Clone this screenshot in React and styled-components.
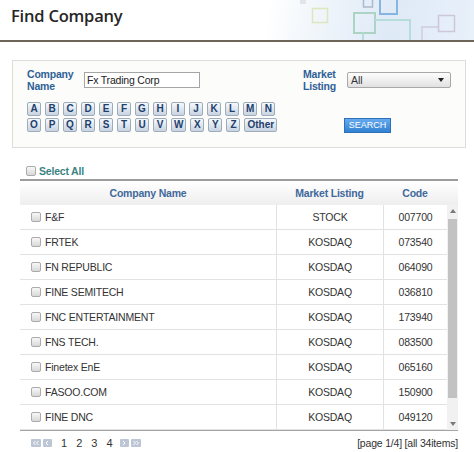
import React from 'react';
import styled, { createGlobalStyle } from 'styled-components';

const Global = createGlobalStyle`
  html, body { margin: 0; padding: 0; background: #fff; }
  body { font-family: "Liberation Sans", Arial, sans-serif; color: #333; }
  * { box-sizing: border-box; }
`;

const Page = styled.div`
  width: 474px;
  height: 452px;
  overflow: hidden;
  background: #fff;
`;

const Header = styled.header`
  display: flex;
  align-items: flex-start;
  justify-content: space-between;
  height: 42px;
  padding-left: 11px;
  border-bottom: 2px solid #6d6558;
  background: linear-gradient(100deg, #ffffff 0%, #ffffff 56%, #f1f6fb 66%, #dfeaf7 82%, #e8f0fa 100%);
  overflow: hidden;
`;

const Title = styled.h1`
  margin: 0;
  padding-top: 5px;
  font-family: "Open Sans", "Noto Sans", sans-serif;
  font-weight: 600;
  font-size: 16.5px;
  line-height: 22px;
  color: #262626;
  letter-spacing: -0.2px;
`;

const Deco = styled.svg`
  display: block;
  flex-shrink: 0;
`;

const SearchBox = styled.section`
  display: flex;
  justify-content: space-between;
  height: 88px;
  margin: 18px 8px 0 12px;
  padding: 7px 14px 0 14px;
  border: 1px solid #dcdcd8;
  background: #fcfcfa;
`;

const Column = styled.div`
  display: flex;
  flex-direction: column;
  width: ${(p) => p.$w}px;
`;

const FieldRow = styled.div`
  display: flex;
  align-items: center;
  height: 24px;
`;

const Label = styled.label`
  width: ${(p) => p.$w}px;
  font-weight: bold;
  font-size: 10.5px;
  line-height: 12px;
  letter-spacing: -0.2px;
  color: #2f6197;
`;

const TextInput = styled.input`
  width: 116px;
  height: 16px;
  padding: 0 2px;
  border: 1px solid #a5a5a5;
  background: #fff;
  font-family: "Liberation Sans", Arial, sans-serif;
  font-size: 10.5px;
  letter-spacing: -0.2px;
  color: #222;
  outline: none;
`;

const SelectBox = styled.div`
  display: flex;
  align-items: center;
  justify-content: space-between;
  width: 104px;
  height: 16px;
  padding: 0 6px 0 3px;
  border: 1px solid #a8a8a8;
  border-radius: 2px;
  background: linear-gradient(#fdfdfd, #e1e1e1);
  font-size: 10.5px;
  color: #333;
`;

const Letters = styled.div`
  display: flex;
  flex-direction: column;
  gap: 2px;
  margin-top: 10px;
`;

const LetterRow = styled.div`
  display: flex;
  gap: 4px;
`;

const LetterBtn = styled.button`
  display: inline-flex;
  align-items: center;
  justify-content: center;
  min-width: 14px;
  height: 14px;
  padding: 0 2px;
  border: 1px solid #9eabb9;
  border-radius: 2px;
  background: linear-gradient(#f6f9fc, #c8d4e2);
  font-family: "Liberation Sans", Arial, sans-serif;
  font-weight: bold;
  font-size: 10px;
  line-height: 12px;
  color: #22406c;
  cursor: pointer;
`;

const SearchBtn = styled.button`
  width: 47px;
  height: 15px;
  margin: 26px 0 0 41px;
  padding: 0;
  border: 1px solid #2f6fb8;
  background: linear-gradient(#66aaee, #3181d2);
  font-family: "Liberation Sans", Arial, sans-serif;
  font-size: 9px;
  line-height: 13px;
  color: #fff;
  cursor: pointer;
`;

const SelectAllRow = styled.div`
  display: flex;
  align-items: center;
  gap: 3px;
  height: 16px;
  margin: 15px 0 0 26px;
  font-weight: bold;
  font-size: 10.5px;
  letter-spacing: -0.2px;
  color: #3a8383;
`;

const Check = styled.span`
  display: inline-block;
  flex-shrink: 0;
  width: 10px;
  height: 10px;
  border: 1px solid #ababab;
  border-radius: 2px;
  background: linear-gradient(#f8f8f8, #d8d8d8);
`;

const TableWrap = styled.div`
  margin: 0 16px 0 20px;
`;

const Table = styled.div`
  border-top: 2px solid #9c9c9c;
  border-bottom: 1px solid #a5a5a5;
`;

const HeadRow = styled.div`
  display: flex;
  height: 24px;
  padding-right: 11px;
  background: linear-gradient(#ffffff, #eeeeee);
`;

const HeadCell = styled.div`
  display: flex;
  align-items: center;
  justify-content: center;
  width: ${(p) => p.$w}px;
  font-weight: bold;
  font-size: 10.5px;
  letter-spacing: -0.2px;
  color: #41699b;
`;

const Body = styled.div`
  display: flex;
  height: 225px;
`;

const Rows = styled.div`
  flex: 1;
  overflow: hidden;
`;

const Row = styled.div`
  display: flex;
  height: 25px;
  border-bottom: 1px solid #e2e2e2;
`;

const Cell = styled.div`
  display: flex;
  align-items: center;
  justify-content: ${(p) => (p.$left ? 'flex-start' : 'center')};
  gap: 4px;
  width: ${(p) => p.$w}px;
  padding-left: ${(p) => (p.$left ? 11 : 0)}px;
  border-left: ${(p) => (p.$left ? 'none' : '1px solid #e2e2e2')};
  font-size: 10.5px;
  letter-spacing: -0.2px;
  color: #333;
`;

const Scrollbar = styled.div`
  display: flex;
  flex-direction: column;
  align-items: center;
  width: 11px;
  background: #f1f1f1;
`;

const ScrollArrow = styled.div`
  display: flex;
  align-items: center;
  justify-content: center;
  height: 12px;
  width: 100%;
`;

const Thumb = styled.div`
  width: 9px;
  height: 179px;
  margin-top: 2px;
  background: #c2c2c2;
`;

const Spacer = styled.div`
  flex: 1;
`;

const Pager = styled.div`
  display: flex;
  align-items: center;
  justify-content: space-between;
  height: 14px;
  margin-top: 5px;
  padding-left: 11px;
  line-height: 13px;
`;

const PagerLeft = styled.div`
  display: flex;
  align-items: center;
  gap: 2px;
`;

const PageNums = styled.div`
  display: flex;
  gap: 9px;
  margin: 0 5px 0 7px;
  font-size: 11px;
  line-height: 13px;
  color: #333;
`;

const PageInfo = styled.span`
  font-size: 10.5px;
  line-height: 13px;
  letter-spacing: -0.2px;
  color: #333;
`;

const PagerIcon = ({ dir, double }) => {
  const w = double ? 10 : 9;
  const paths = [];
  const pts = (x) => (dir === 'left' ? `M${x + 2} 2 L${x} 4 L${x + 2} 6` : `M${x} 2 L${x + 2} 4 L${x} 6`);
  if (double) {
    paths.push(pts(2.5), pts(5.5));
  } else {
    paths.push(pts(3));
  }
  return (
    <svg width={w} height="8" viewBox={`0 0 ${w} 8`}>
      <rect x="0" y="0" width={w} height="8" rx="1" fill="#bcc6d4" />
      {paths.map((d, i) => (
        <path key={i} d={d} stroke="#fff" strokeWidth="1" fill="none" />
      ))}
    </svg>
  );
};

const Tri = ({ up, color = '#7a7a7a' }) => (
  <svg width="6" height="4" viewBox="0 0 6 4">
    <path d={up ? 'M0 4 L3 0 L6 4 Z' : 'M0 0 L6 0 L3 4 Z'} fill={color} />
  </svg>
);

const row1 = 'ABCDEFGHIJKLMN'.split('');
const row2 = [...'OPQRSTUVWXYZ'.split(''), 'Other'];

const data = [
  ['F&F', 'STOCK', '007700'],
  ['FRTEK', 'KOSDAQ', '073540'],
  ['FN REPUBLIC', 'KOSDAQ', '064090'],
  ['FINE SEMITECH', 'KOSDAQ', '036810'],
  ['FNC ENTERTAINMENT', 'KOSDAQ', '173940'],
  ['FNS TECH.', 'KOSDAQ', '083500'],
  ['Finetex EnE', 'KOSDAQ', '065160'],
  ['FASOO.COM', 'KOSDAQ', '150900'],
  ['FINE DNC', 'KOSDAQ', '049120'],
];

const COLS = [256, 107, 64];

export default function App() {
  return (
    <Page>
      <Global />
      <Header>
        <Title>Find Company</Title>
        <Deco width="180" height="40" viewBox="0 0 180 40">
          <rect x="6" y="0" width="6" height="4" fill="#e2e4ea" />
          <rect x="18.5" y="8.5" width="15" height="14" fill="none" stroke="#dfe5bd" strokeWidth="1.5" />
          <rect x="69.5" y="-2" width="9" height="9" fill="none" stroke="#aab9cc" strokeWidth="1.5" />
          <rect x="86" y="-2" width="17" height="16" fill="none" stroke="#86b5e2" strokeWidth="2" />
          <rect x="60" y="13" width="21" height="20" fill="none" stroke="#acd3c4" strokeWidth="2" />
          <path d="M69 33 V40 M81 20 H116 V40" fill="none" stroke="#b6ddd9" strokeWidth="2" />
          <rect x="144.5" y="15.5" width="16" height="16" fill="none" stroke="#ccc8da" strokeWidth="1.5" />
          <path d="M128 40 V27 H144" fill="none" stroke="#cfcbdc" strokeWidth="1.5" />
        </Deco>
      </Header>

      <SearchBox>
        <Column $w={276}>
          <FieldRow>
            <Label $w={57}>Company<br />Name</Label>
            <TextInput readOnly value="Fx Trading Corp" />
          </FieldRow>
          <Letters>
            <LetterRow>
              {row1.map((l) => (
                <LetterBtn key={l}>{l}</LetterBtn>
              ))}
            </LetterRow>
            <LetterRow>
              {row2.map((l) => (
                <LetterBtn key={l}>{l}</LetterBtn>
              ))}
            </LetterRow>
          </Letters>
        </Column>
        <Column $w={148}>
          <FieldRow>
            <Label $w={44}>Market<br />Listing</Label>
            <SelectBox>
              <span>All</span>
              <Tri color="#222" />
            </SelectBox>
          </FieldRow>
          <SearchBtn>SEARCH</SearchBtn>
        </Column>
      </SearchBox>

      <SelectAllRow>
        <Check />
        <span>Select All</span>
      </SelectAllRow>

      <TableWrap>
        <Table>
          <HeadRow>
            <HeadCell $w={COLS[0]}>Company Name</HeadCell>
            <HeadCell $w={COLS[1]}>Market Listing</HeadCell>
            <HeadCell $w={COLS[2]}>Code</HeadCell>
          </HeadRow>
          <Body>
            <Rows>
              {data.map(([name, market, code]) => (
                <Row key={name}>
                  <Cell $w={COLS[0]} $left>
                    <Check />
                    <span>{name}</span>
                  </Cell>
                  <Cell $w={COLS[1]}>{market}</Cell>
                  <Cell $w={COLS[2]}>{code}</Cell>
                </Row>
              ))}
            </Rows>
            <Scrollbar>
              <ScrollArrow>
                <Tri up />
              </ScrollArrow>
              <Thumb />
              <Spacer />
              <ScrollArrow>
                <Tri />
              </ScrollArrow>
            </Scrollbar>
          </Body>
        </Table>
        <Pager>
          <PagerLeft>
            <PagerIcon dir="left" double />
            <PagerIcon dir="left" />
            <PageNums>
              <span>1</span>
              <span>2</span>
              <span>3</span>
              <span>4</span>
            </PageNums>
            <PagerIcon dir="right" />
            <PagerIcon dir="right" double />
          </PagerLeft>
          <PageInfo>[page 1/4] [all 34items]</PageInfo>
        </Pager>
      </TableWrap>
    </Page>
  );
}
